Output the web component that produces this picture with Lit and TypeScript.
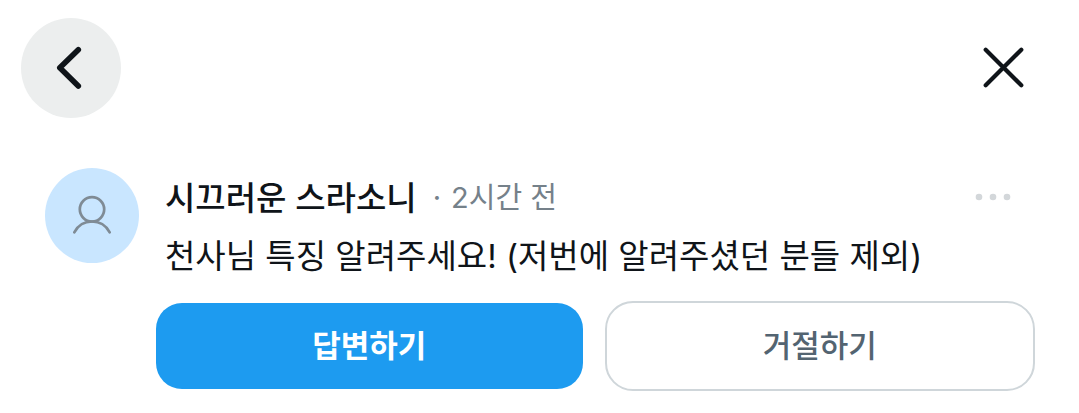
import { LitElement, html, css } from "lit";
import { customElement, property } from "lit/decorators.js";

@customElement("question-card")
class QuestionCard extends LitElement {
  @property() author = "";
  @property() time = "";
  @property() message = "";

  static styles = css`
    :host {
      display: block;
    }
    .card {
      display: grid;
      grid-template-columns: 94px minmax(0, 1fr);
      column-gap: 17px;
      padding: 0 44px 22px 45px;
    }
    .avatar {
      display: block;
      width: 94px;
      height: 95px;
    }
    .text {
      padding: 9px 24px 0 9px;
    }
    .meta {
      display: flex;
      align-items: center;
      height: 42px;
    }
    .author {
      margin: 0;
      font-size: 33px;
      line-height: 42px;
      font-weight: 500;
      color: #0f1419;
    }
    .time {
      display: flex;
      gap: 10px;
      margin-left: 16px;
      font-size: 29px;
      line-height: 42px;
      color: #75818a;
    }
    .message {
      margin: 16px 0 0;
      font-size: 33px;
      line-height: 42px;
      color: #0f1419;
    }
    .more {
      display: block;
      margin-left: auto;
      padding: 0 0 2px;
      border: 0;
      background: none;
      cursor: pointer;
    }
    .more svg {
      display: block;
    }
    .actions {
      display: flex;
      gap: 22px;
      align-items: center;
      margin-top: 24px;
    }
    .button {
      box-sizing: content-box;
      flex: 1 1 0;
      padding: 22px 0;
      border: 0;
      border-radius: 26px;
      font: inherit;
      font-size: 31px;
      line-height: 42px;
      font-weight: 700;
      cursor: pointer;
    }
    .primary {
      background: #1d9bf0;
      color: #fff;
    }
    .outline {
      border: 2px solid #cfd6da;
      border-radius: 28px;
      background: #fff;
      color: #536471;
      font-weight: 500;
    }
  `;

  render() {
    return html`
      <article class="card">
        <svg class="avatar" viewBox="0 0 94 95" role="img" aria-label="프로필">
          <ellipse cx="47" cy="47.5" rx="47" ry="47.5" fill="#c9e6ff" />
          <g fill="none" stroke="#7f8b95" stroke-width="2.7" stroke-linecap="round">
            <circle cx="47" cy="41.3" r="12.2" />
            <path d="M29.3 64.3C33 57.3 39.5 53.5 47 53.5S61 57.3 64.7 64.3" />
          </g>
        </svg>
        <div>
          <div class="text">
            <div class="meta">
              <h2 class="author">${this.author}</h2>
              <div class="time"><span>·</span><span>${this.time}</span></div>
              <button class="more" aria-label="더보기">
                <svg width="36" height="42" viewBox="0 0 36 42" fill="#d3d7da">
                  <circle cx="4" cy="21" r="3.3" />
                  <circle cx="18" cy="21" r="3.3" />
                  <circle cx="32" cy="21" r="3.3" />
                </svg>
              </button>
            </div>
            <p class="message">${this.message}</p>
          </div>
          <div class="actions">
            <button class="button primary">답변하기</button>
            <button class="button outline">거절하기</button>
          </div>
        </div>
      </article>
    `;
  }
}

@customElement("app-root")
class AppRoot extends LitElement {
  static styles = css`
    :host {
      display: block;
      background: #fff;
      font-family: Inter, "Noto Sans CJK KR", sans-serif;
    }
    .header {
      display: flex;
      align-items: center;
      justify-content: space-between;
      padding: 18px 52px 50px 21px;
    }
    .icon {
      display: grid;
      place-items: center;
      padding: 0;
      border: 0;
      background: none;
      cursor: pointer;
    }
    .back {
      width: 100px;
      height: 100px;
      border-radius: 50%;
      background: #eceeee;
    }
    .icon svg {
      display: block;
      fill: none;
      stroke: #0f1419;
      stroke-linecap: round;
      stroke-linejoin: round;
    }
  `;

  render() {
    return html`
      <header class="header">
        <button class="icon back" aria-label="뒤로">
          <svg width="100" height="100" viewBox="0 0 100 100" stroke-width="5.6">
            <path d="M57.3 31.7L38.8 49.8L57.3 68" />
          </svg>
        </button>
        <button class="icon" aria-label="닫기">
          <svg width="48" height="48" viewBox="0 0 48 48" stroke-width="4.2">
            <path d="M6.7 5.8L42.3 41.2M42.3 5.8L6.7 41.2" />
          </svg>
        </button>
      </header>
      <question-card
        author="시끄러운 스라소니"
        time="2시간 전"
        message="천사님 특징 알려주세요! (저번에 알려주셨던 분들 제외)"
      ></question-card>
    `;
  }
}
